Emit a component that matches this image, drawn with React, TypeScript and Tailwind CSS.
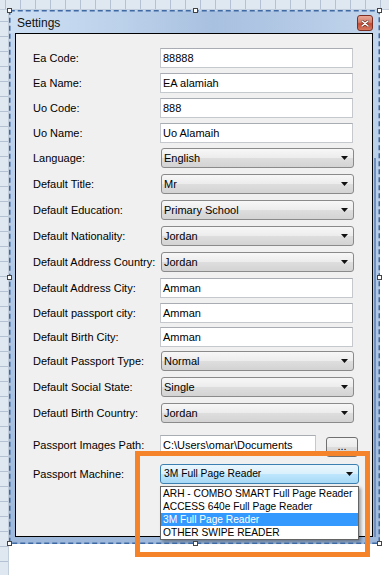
import React from 'react';

type Row = { label: string; kind: 'text' | 'combo'; value: string; h: string };

const rows: Row[] = [
  { label: 'Ea Code:', kind: 'text', value: '88888', h: 'h-[25px]' },
  { label: 'Ea Name:', kind: 'text', value: 'EA alamiah', h: 'h-[25px]' },
  { label: 'Uo Code:', kind: 'text', value: '888', h: 'h-[25px]' },
  { label: 'Uo Name:', kind: 'text', value: 'Uo Alamaih', h: 'h-[25px]' },
  { label: 'Language:', kind: 'combo', value: 'English', h: 'h-[26px]' },
  { label: 'Default Title:', kind: 'combo', value: 'Mr', h: 'h-[26px]' },
  { label: 'Default Education:', kind: 'combo', value: 'Primary School', h: 'h-[26px]' },
  { label: 'Default Nationality:', kind: 'combo', value: 'Jordan', h: 'h-[26px]' },
  { label: 'Default Address Country:', kind: 'combo', value: 'Jordan', h: 'h-[26px]' },
  { label: 'Default Address City:', kind: 'text', value: 'Amman', h: 'h-[25px]' },
  { label: 'Default passport city:', kind: 'text', value: 'Amman', h: 'h-[24px]' },
  { label: 'Default Birth City:', kind: 'text', value: 'Amman', h: 'h-[24px]' },
  { label: 'Default Passport Type:', kind: 'combo', value: 'Normal', h: 'h-[26px]' },
  { label: 'Default Social State:', kind: 'combo', value: 'Single', h: 'h-[26px]' },
  { label: 'Defautl Birth Country:', kind: 'combo', value: 'Jordan', h: 'h-[32px]' },
];

const machines = [
  'ARH - COMBO SMART Full Page Reader',
  'ACCESS 640e Full Page Reader',
  '3M Full Page Reader',
  'OTHER SWIPE READER',
];

function Arrow() {
  return (
    <svg width="7" height="4" viewBox="0 0 7 4">
      <polygon points="0,0 7,0 3.5,4" fill="#111" />
    </svg>
  );
}

function TextBox({ value, w = 'w-[193px]' }: { value: string; w?: string }) {
  return (
    <div className={`flex h-[20px] ${w} items-center whitespace-nowrap border border-[#c5c9ce] border-t-[#a9adb3] bg-white pl-[2px]`}>
      {value}
    </div>
  );
}

function Combo({ value }: { value: string }) {
  return (
    <div className="ml-px flex h-[20px] w-[193px] items-center justify-between rounded-[3px] border border-[#8a8a8a] bg-[linear-gradient(180deg,#f7f7f7_0%,#ececec_50%,#dedede_50%,#d3d3d3_100%)] pl-[2px] pr-[5px]">
      <span>{value}</span>
      <Arrow />
    </div>
  );
}

function Handle({ pos }: { pos: string }) {
  return <div className={`absolute h-[5px] w-[5px] border border-[#444] bg-white ${pos}`} />;
}

export default function App() {
  return (
    <div className="relative h-[575px] w-[389px] overflow-hidden bg-white font-['Liberation_Sans',Arial,sans-serif] text-[11px] text-black">
      {/* designer grid, top */}
      <div className="h-[10px] border-b border-[#c2cedc] bg-[repeating-linear-gradient(90deg,#dfe7f1_0px,#dfe7f1_5px,#b3c1d2_5px,#b3c1d2_6px,#dfe7f1_6px,#dfe7f1_15px)]" />
      <div className="flex">
        {/* designer grid, left */}
        <div className="h-[565px] w-[9px] border-r border-[#c2cedc] bg-[repeating-linear-gradient(180deg,#dfe7f1_0px,#dfe7f1_11px,#b3c1d2_11px,#b3c1d2_12px,#dfe7f1_12px,#dfe7f1_15px)]" />

        {/* form window */}
        <div className="relative h-[534px] w-[371px] bg-[linear-gradient(180deg,#c4d7ed_0%,#b2c9e5_50%,#9db8da_100%)] p-px">
          <div className="flex h-[22px] items-start justify-between bg-[linear-gradient(90deg,#cddff3_0%,#bcd1ea_30%,#a9c1e0_55%,#b4cae6_80%,#c3d6ec_100%)] pl-[7px] pr-[6px]">
            <span className="pt-[5px] text-[12px] leading-[14px] text-[#111]">Settings</span>
            <div className="mt-[4px] flex h-[16px] w-[16px] items-center justify-center rounded-[3px] border border-[#7a2f22] bg-[linear-gradient(180deg,#e9a897_0%,#d37d6a_45%,#c24b34_55%,#d77a62_100%)]">
              <svg width="8" height="7" viewBox="0 0 8 7">
                <path d="M1 1 L7 6 M7 1 L1 6" stroke="#5a1d12" strokeWidth="2.6" strokeLinecap="round" />
                <path d="M1 1 L7 6 M7 1 L1 6" stroke="#fff" strokeWidth="1.6" strokeLinecap="round" />
              </svg>
            </div>
          </div>

          <div className="flex">
            <div className="ml-[5px] h-[504px] w-[358px] border border-black bg-[#f0f0f0] pl-[17px] pt-[14px]">
              {rows.map((r) => (
                <div key={r.label} className={`flex ${r.h}`}>
                  <div className="flex h-[20px] w-[127px] items-center">{r.label}</div>
                  {r.kind === 'text' ? <TextBox value={r.value} /> : <Combo value={r.value} />}
                </div>
              ))}

              <div className="flex h-[29px]">
                <div className="flex h-[20px] w-[127px] items-center">Passport Images Path:</div>
                <TextBox value="C:\Users\omar\Documents" w="w-[156px]" />
                <div className="ml-[10px] mt-[2px] flex h-[20px] w-[32px] items-end justify-center rounded-[3px] border border-[#707070] bg-[linear-gradient(180deg,#f4f4f4_0%,#ebebeb_50%,#dddddd_50%,#cfcfcf_100%)] pb-[6px] leading-[8px]">
                  ...
                </div>
              </div>

              <div className="flex h-[20px]">
                <div className="flex h-[20px] w-[127px] items-center">Passport Machine:</div>
                <div className="relative">
                  <div className="flex h-[20px] w-[199px] items-center justify-between rounded-[3px] border border-[#3c7fb1] bg-[linear-gradient(180deg,#eaf6fd_0%,#d9f0fc_50%,#bee6fd_50%,#a7d9f5_100%)] pl-[3px] pr-[5px] text-[10.3px]">
                    <span>3M Full Page Reader</span>
                    <Arrow />
                  </div>
                  <div className="absolute left-0 top-[22px] w-[199px] whitespace-nowrap border border-[#646464] bg-white text-[10.2px] leading-[13px] shadow-[2px_2px_3px_rgba(0,0,0,0.35)]">
                    {machines.map((m, i) => (
                      <div key={m} className={`h-[13px] pl-[2px] ${i === 2 ? 'bg-[#3399ff] text-white' : ''}`}>
                        {m}
                      </div>
                    ))}
                  </div>
                </div>
              </div>
            </div>
            {/* right frame edge */}
            <div className="ml-px mt-[125px] h-[379px] w-[2px] bg-[#6f8fbf]" />
          </div>

          {/* selection adorner */}
          <svg className="pointer-events-none absolute left-0 top-0" width="371" height="534">
            <rect x="0.75" y="0.75" width="369.5" height="532.5" fill="none" stroke="#3f69a3" strokeWidth="1.5" strokeDasharray="5 3" />
          </svg>
          <Handle pos="left-[-2px] top-[-2px]" />
          <Handle pos="left-[184px] top-[-2px]" />
          <Handle pos="left-[368px] top-[-2px]" />
          <Handle pos="left-[-2px] top-[265px]" />
          <Handle pos="left-[368px] top-[265px]" />
          <Handle pos="left-[-2px] top-[531px]" />
          <Handle pos="left-[184px] top-[531px]" />
          <Handle pos="left-[368px] top-[531px]" />
        </div>
      </div>

      {/* annotation */}
      <div className="pointer-events-none absolute left-[135px] top-[451px] h-[106px] w-[235px] border-[5px] border-[#f5832a]" />
    </div>
  );
}
